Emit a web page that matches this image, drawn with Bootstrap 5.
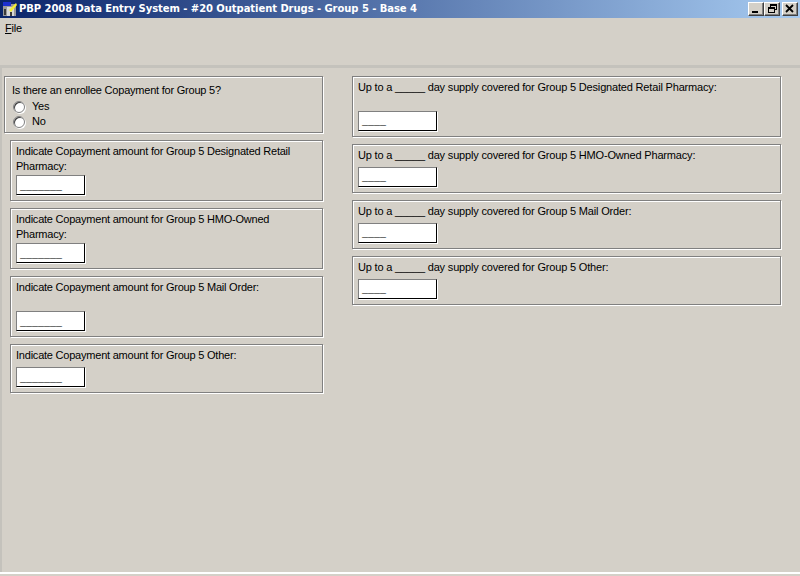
<!DOCTYPE html>
<html lang="en">
<head>
  <meta charset="UTF-8">
  <meta name="viewport" content="width=device-width, initial-scale=1">
  <title>PBP 2008 Data Entry System</title>
  <link href="https://cdn.jsdelivr.net/npm/bootstrap@5.3.0/dist/css/bootstrap.min.css" rel="stylesheet">
  <style>
    html, body { height: 100%; }
    body {
      background: #d4d0c8;
      color: #000;
      font-family: "Liberation Sans", Arial, sans-serif;
      font-size: 11px;
      letter-spacing: -0.22px;
      line-height: 15px;
      overflow: hidden;
    }
    .app-window { height: 576px; }
    .title-bar {
      height: 18px;
      background: linear-gradient(to right, #0a246a, #a6caf0);
      color: #fff;
      font-family: "DejaVu Sans", sans-serif;
      font-size: 10px;
      font-weight: 700;
      letter-spacing: -0.06px;
      line-height: 18px;
      padding: 0 2px;
    }
    .title-text { margin-left: 1px; }
    .win-btn {
      width: 16px;
      height: 14px;
      padding: 0;
      background: #d4d0c8;
      border: 1px solid;
      border-color: #fff #404040 #404040 #fff;
      box-shadow: inset -1px -1px 0 #808080;
      border-radius: 0;
    }
    .win-btn svg { display: block; }
    .close-btn { margin-left: 2px; }
    .menu-strip { height: 47px; padding: 3px 5px; }
    .menu-strip u { text-underline-offset: 1px; }
    .band { height: 3px; background: #c4c2bc; }
    .form-area { padding: 8px 19px 0 2px; gap: 29px; border-left: 2px solid #c4c2bc; }
    .left-col { width: 319px; gap: 7px; }
    .right-col { width: 429px; gap: 7px; letter-spacing: -0.175px; }
    .group-box {
      border: 1px solid #808080;
      box-shadow: 1px 1px 0 #fff, inset 1px 1px 0 #fff;
      padding: 3px 5px 5px;
    }
    .enrollee-box { height: 57px; padding: 6px 7px 0; }
    .enrollee-box > div:first-child { margin-bottom: 1px; }
    .indent { margin-left: 6px; }
    .copay-box { height: 61px; }
    .copay-box.single { height: 49px; }
    .days-box { height: 49px; }
    .days-box.tall { height: 61px; }
    .radio-line { height: 15px; padding-left: 1px; }
    .radio-dot {
      width: 12px;
      height: 12px;
      border-radius: 50%;
      background: #fff;
      border: 1px solid #808080;
      box-shadow: inset 1px 1px 0 #404040, 1px 1px 0 #fff;
    }
    .radio-label { margin-left: 7px; }
    .entry-field {
      height: 20px;
      background: #fff;
      border: 1px solid;
      border-color: #808080 #000 #000 #808080;
      box-shadow: 1px 1px 0 #fff;
      font-family: "Liberation Mono", monospace;
      font-size: 10px;
      font-weight: 700;
      letter-spacing: 0;
      line-height: 23px;
      padding-left: 3px;
      overflow: hidden;
    }
    .copay-field { width: 69px; }
    .days-field { width: 79px; line-height: 22px; }
    .bottom-edge { height: 2px; background: #fff; }
    .bottom-rest { height: 2px; }
  </style>
</head>
<body>
<div class="app-window d-flex flex-column">
  <div class="title-bar d-flex align-items-center">
    <svg width="16" height="16" viewBox="0 0 16 16" class="flex-shrink-0">
      <rect x="1" y="3" width="13" height="12" fill="#9a9a9a"/>
      <rect x="1" y="1" width="8" height="4" fill="#1c2fd0"/>
      <rect x="5" y="6" width="7" height="9" fill="#d8d8d8"/>
      <path d="M7 9 L14 2 L15 4 L9 11 Z" fill="#f4f030"/>
      <rect x="2" y="8" width="2" height="6" fill="#3a3a3a"/>
      <rect x="8" y="11" width="2" height="4" fill="#3a3a3a"/>
    </svg>
    <span class="title-text flex-grow-1">PBP 2008 Data Entry System - #20 Outpatient Drugs - Group 5 - Base 4</span>
    <div class="d-flex">
      <button class="win-btn" type="button"><svg width="14" height="12" viewBox="0 0 14 12"><rect x="3" y="8" width="6" height="2" fill="#000"/></svg></button>
      <button class="win-btn" type="button"><svg width="14" height="12" viewBox="0 0 14 12"><path d="M5 1h7v6h-2v-1h1v-3h-5v1h-1z M3 4h7v6h-7z M4 6v3h5v-3z" fill="#000" fill-rule="evenodd"/></svg></button>
      <button class="win-btn close-btn" type="button"><svg width="14" height="12" viewBox="0 0 14 12"><path d="M3 2 L10 9 M10 2 L3 9" stroke="#000" stroke-width="1.8" fill="none"/></svg></button>
    </div>
  </div>

  <div class="menu-strip"><u>F</u>ile</div>
  <div class="band"></div>

  <div class="form-area d-flex align-items-start flex-grow-1">
    <div class="left-col d-flex flex-column">
      <div class="group-box enrollee-box d-flex flex-column">
        <div>Is there an enrollee Copayment for Group 5?</div>
        <div class="radio-line d-flex align-items-center"><span class="radio-dot"></span><span class="radio-label">Yes</span></div>
        <div class="radio-line d-flex align-items-center"><span class="radio-dot"></span><span class="radio-label">No</span></div>
      </div>
      <div class="group-box indent copay-box d-flex flex-column">
        <div>Indicate Copayment amount for Group 5 Designated Retail Pharmacy:</div>
        <div class="entry-field copay-field mt-auto">_______</div>
      </div>
      <div class="group-box indent copay-box d-flex flex-column">
        <div>Indicate Copayment amount for Group 5 HMO-Owned Pharmacy:</div>
        <div class="entry-field copay-field mt-auto">_______</div>
      </div>
      <div class="group-box indent copay-box d-flex flex-column">
        <div>Indicate Copayment amount for Group 5 Mail Order:</div>
        <div class="entry-field copay-field mt-auto">_______</div>
      </div>
      <div class="group-box indent copay-box single d-flex flex-column">
        <div>Indicate Copayment amount for Group 5 Other:</div>
        <div class="entry-field copay-field mt-auto">_______</div>
      </div>
    </div>
    <div class="right-col d-flex flex-column">
      <div class="group-box days-box tall d-flex flex-column">
        <div>Up to a _____ day supply covered for Group 5 Designated Retail Pharmacy:</div>
        <div class="entry-field days-field mt-auto">____</div>
      </div>
      <div class="group-box days-box d-flex flex-column">
        <div>Up to a _____ day supply covered for Group 5 HMO-Owned Pharmacy:</div>
        <div class="entry-field days-field mt-auto">____</div>
      </div>
      <div class="group-box days-box d-flex flex-column">
        <div>Up to a _____ day supply covered for Group 5 Mail Order:</div>
        <div class="entry-field days-field mt-auto">____</div>
      </div>
      <div class="group-box days-box d-flex flex-column">
        <div>Up to a _____ day supply covered for Group 5 Other:</div>
        <div class="entry-field days-field mt-auto">____</div>
      </div>
    </div>
  </div>

  <div class="bottom-edge"></div>
  <div class="bottom-rest"></div>
</div>
<script src="https://cdn.jsdelivr.net/npm/bootstrap@5.3.0/dist/js/bootstrap.bundle.min.js"></script>
</body>
</html>
